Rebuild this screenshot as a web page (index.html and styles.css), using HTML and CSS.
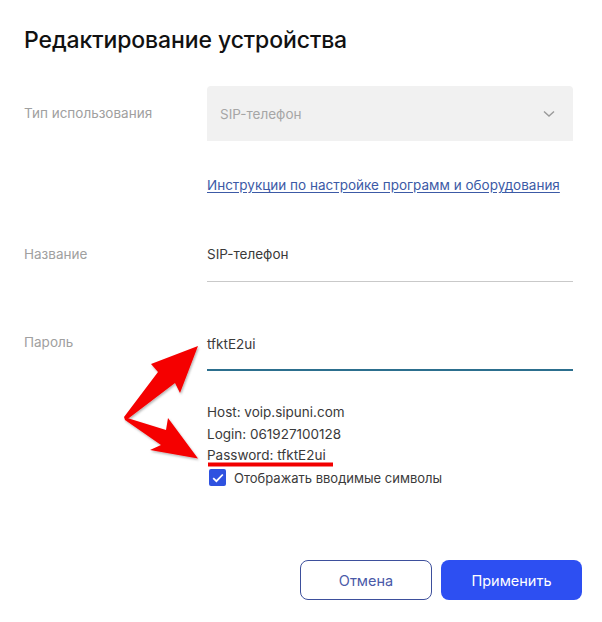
FILE: index.html
```html
<!DOCTYPE html>
<html lang="ru">
<head>
<meta charset="utf-8">
<link rel="stylesheet" href="styles.css">
</head>
<body>
<div class="dialog">
  <h1 class="title">Редактирование устройства</h1>
  <div class="form">
    <div class="row row-select">
      <div class="label">Тип использования</div>
      <div class="field">
        <div class="select">
          <span>SIP-телефон</span>
          <svg class="chev" width="12" height="8" viewBox="0 0 12 8"><path d="M1 1.5 L6 6 L11 1.5" fill="none" stroke="#9a9a9a" stroke-width="1.4"/></svg>
        </div>
        <a class="link" href="#">Инструкции по настройке программ и оборудования</a>
      </div>
    </div>
    <div class="row row-name">
      <div class="label">Название</div>
      <div class="field">
        <div class="input">SIP-телефон</div>
      </div>
    </div>
    <div class="row row-pass">
      <div class="label">Пароль</div>
      <div class="field">
        <div class="input input-active">tfktE2ui</div>
        <div class="info">
          <div>Host: voip.sipuni.com</div>
          <div>Login: 061927100128</div>
          <div class="pw">Password: tfktE2ui</div>
        </div>
        <label class="check">
          <span class="box"><svg width="12" height="10" viewBox="0 0 12 10"><path d="M1.2 5.2 L4.4 8.2 L10.8 1.5" fill="none" stroke="#fff" stroke-width="1.8"/></svg></span>
          <span>Отображать вводимые символы</span>
        </label>
      </div>
    </div>
  </div>
  <div class="actions">
    <button class="btn btn-cancel">Отмена</button>
    <button class="btn btn-apply">Применить</button>
  </div>
  <svg class="annot" width="602" height="622" viewBox="0 0 602 622">
    <defs>
      <filter id="sh" x="-20%" y="-20%" width="140%" height="140%">
        <feDropShadow dx="1" dy="1.5" stdDeviation="1.2" flood-color="#000" flood-opacity="0.3"/>
      </filter>
    </defs>
    <g filter="url(#sh)" fill="#f50000">
      <path d="M124 417 L158 372 L151 364 L198 346 L180 393 L175 383 L127 419.5 Z"/>
      <path d="M124 417 L166 430 L168 418 L198 458.5 L150 450 L161 445 L125 420 Z"/>
    </g>
    <rect x="208" y="462.5" width="125" height="4" fill="#f20000"/>
  </svg>
</div>
</body>
</html>
```
FILE: styles.css
```css
* { box-sizing: border-box; }
html, body { margin: 0; padding: 0; background: #fff; }
body {
  font-family: Inter, "Noto Sans", sans-serif;
  color: #3a3a3a;
  width: 602px;
  height: 622px;
  overflow: hidden;
}
.dialog {
  position: relative;
  padding: 24px 29px 0 24px;
  height: 622px;
}
.title {
  margin: 0;
  font-size: 23px;
  font-weight: 500;
  line-height: 32px;
  color: #111;
  letter-spacing: -0.1px;
}
.form { margin-top: 30px; }
.row {
  display: grid;
  grid-template-columns: 183px 366px;
}
.label {
  font-size: 13.5px;
  color: #a0a0a0;
  line-height: 20px;
}
.row-select .label { padding-top: 17px; }
.select {
  height: 55px;
  background: #f1f1f1;
  border-radius: 4px 4px 0 0;
  display: flex;
  align-items: center;
  justify-content: space-between;
  padding: 0 18px 0 13px;
  font-size: 13.5px;
  color: #a6a6a6;
}
.link {
  display: block;
  margin-top: 35px;
  font-size: 13.5px;
  line-height: 18px;
  color: #3c5aa6;
  text-decoration: underline;
  text-underline-offset: 2px;
}
.row-name { margin-top: 50px; }
.input {
  font-size: 13.5px;
  line-height: 20px;
  color: #3a3a3a;
  padding-bottom: 17px;
  border-bottom: 1px solid #c9c9c9;
}
.row-pass { margin-top: 52px; }
.row-pass .label { margin-top: -2px; }
.input-active {
  padding-bottom: 15px;
  border-bottom: 2px solid #2c6f8e;
}
.info {
  margin-top: 31px;
  font-size: 13.5px;
  line-height: 21.5px;
  color: #3a3a3a;
}
.check {
  display: flex;
  align-items: center;
  gap: 8px;
  margin-top: 1px;
  font-size: 13px;
  line-height: 20px;
  color: #3a3a3a;
}
.box {
  width: 17px;
  height: 17px;
  border-radius: 2px;
  background: #2f52e0;
  display: flex;
  align-items: center;
  justify-content: center;
  margin-left: 2px;
}
.actions {
  position: absolute;
  left: 300px;
  top: 560px;
  display: flex;
  gap: 9px;
}
.btn {
  height: 40px;
  border-radius: 8px;
  font-family: Inter, "Noto Sans", sans-serif;
  font-size: 14.5px;
  cursor: pointer;
}
.btn-cancel {
  width: 132px;
  background: #fff;
  border: 1px solid #3d4f9c;
  color: #4a5aa8;
}
.btn-apply {
  width: 141px;
  background: #2d4ff2;
  border: none;
  color: #fff;
}
.annot {
  position: absolute;
  left: 0;
  top: 0;
  pointer-events: none;
}
```
